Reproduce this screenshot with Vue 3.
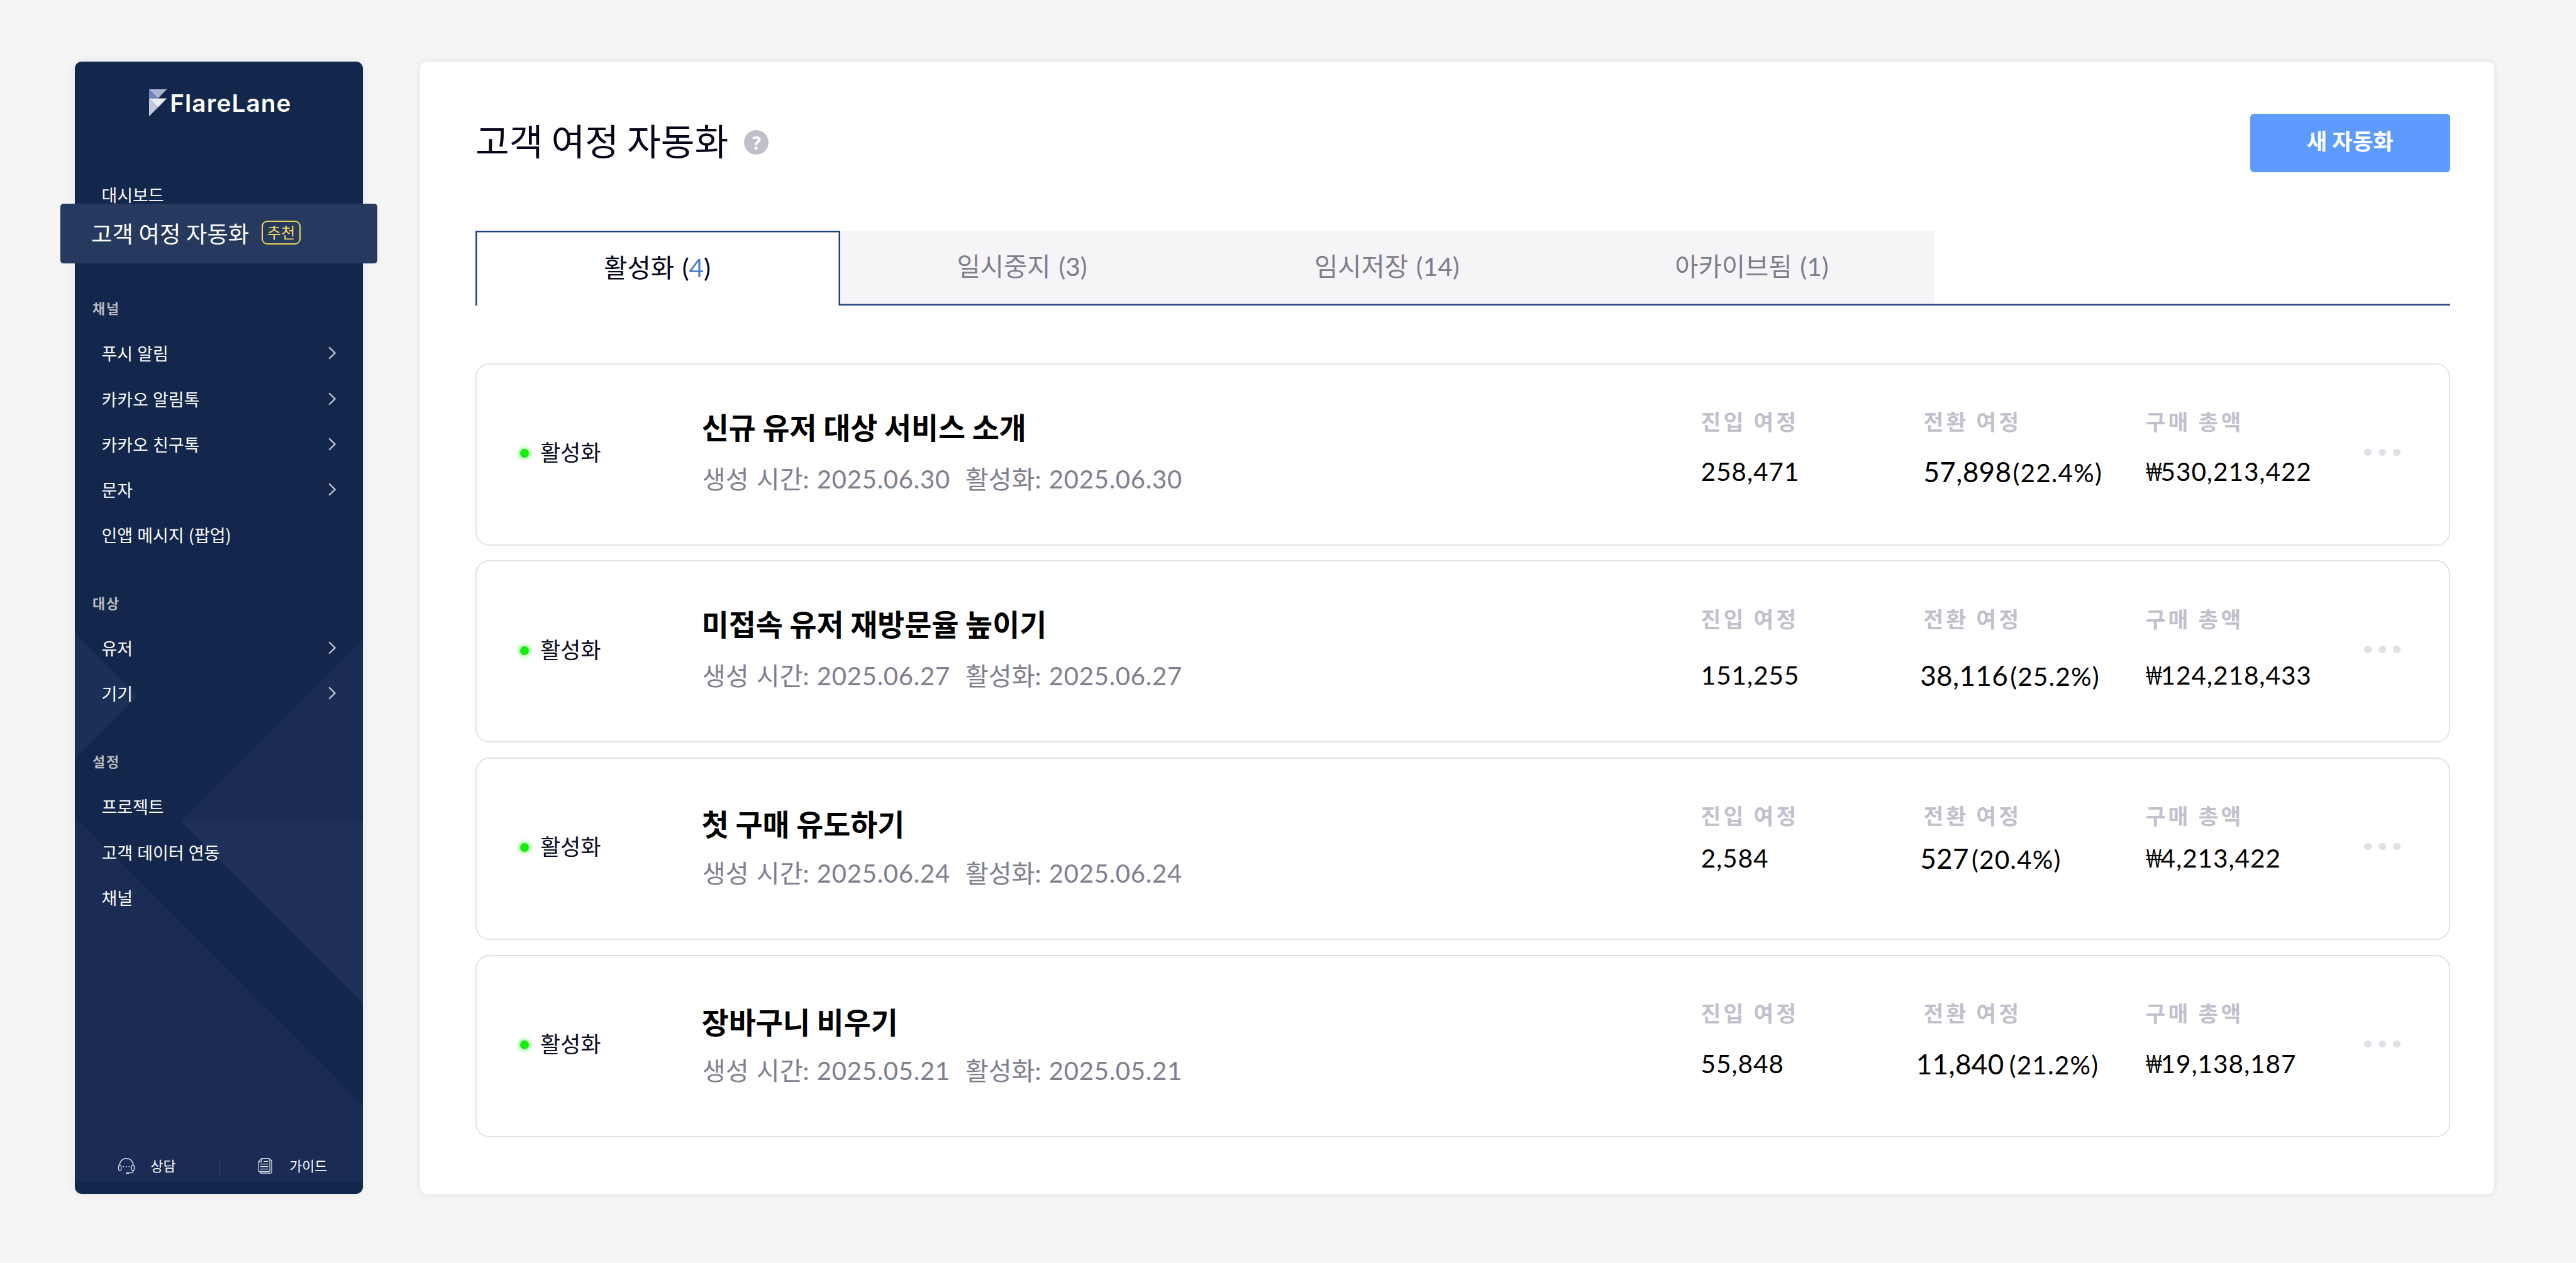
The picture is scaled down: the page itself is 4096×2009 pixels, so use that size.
<script setup>
import { ref } from 'vue';

const menu = [
  {
    title: '채널',
    items: [
      { label: '푸시 알림', more: true },
      { label: '카카오 알림톡', more: true },
      { label: '카카오 친구톡', more: true },
      { label: '문자', more: true },
      { label: '인앱 메시지 (팝업)', more: false },
    ],
  },
  {
    title: '대상',
    items: [
      { label: '유저', more: true },
      { label: '기기', more: true },
    ],
  },
  {
    title: '설정',
    items: [
      { label: '프로젝트', more: false },
      { label: '고객 데이터 연동', more: false },
      { label: '채널', more: false },
    ],
  },
];

const tabs = [
  { label: '활성화', count: 4 },
  { label: '일시중지', count: 3 },
  { label: '임시저장', count: 14 },
  { label: '아카이브됨', count: 1 },
];

const activeTab = ref(0);

const journeys = [
  {
    title: '신규 유저 대상 서비스 소개',
    date: '2025.06.30',
    entered: '258,471',
    converted: '57,898',
    rate: '(22.4%)',
    total: '530,213,422',
  },
  {
    title: '미접속 유저 재방문율 높이기',
    date: '2025.06.27',
    entered: '151,255',
    converted: '38,116',
    rate: '(25.2%)',
    total: '124,218,433',
  },
  {
    title: '첫 구매 유도하기',
    date: '2025.06.24',
    entered: '2,584',
    converted: '527',
    rate: '(20.4%)',
    total: '4,213,422',
  },
  {
    title: '장바구니 비우기',
    date: '2025.05.21',
    entered: '55,848',
    converted: '11,840',
    rate: '(21.2%)',
    total: '19,138,187',
  },
];
</script>

<template>
  <div class="page">
    <aside class="sidebar">
      <svg class="backdrop" viewBox="162 134.5 626.6 2459.5" preserveAspectRatio="none">
        <polygon points="162,1377.5 299,1512 162,1648.6" fill="#1a3056" />
        <polygon points="788.6,1390 391.8,1783.7 788.6,1783.7" fill="#1b2c54" />
        <polygon points="391.8,1783.7 788.6,1783.7 788.6,2182" fill="#1f3159" />
        <polygon points="162,1783.7 170,1783.7 788.6,2404 788.6,2568 162,2568" fill="#1a2c54" />
      </svg>

      <div class="logo">
        <svg class="mark" viewBox="0 0 38.5 58.8">
          <path d="M0 0H38.5L19.3 19.8Z" fill="#a9b4d3" />
          <path d="M0 0L19.3 19.8H0Z" fill="#6f84b8" />
          <path d="M0 19.8H38.5L19.3 39.6Z" fill="#e9ecf5" />
          <path d="M0 19.8L19.3 39.6L0 58.8Z" fill="#c0cadf" />
        </svg>
        <span class="brand">FlareLane</span>
      </div>

      <nav>
        <div class="item">대시보드</div>
        <div class="current">
          <span>고객 여정 자동화</span>
          <span class="badge">추천</span>
        </div>
        <template v-for="group in menu" :key="group.title">
          <div class="group">{{ group.title }}</div>
          <div v-for="item in group.items" :key="item.label" class="item">
            <span>{{ item.label }}</span>
            <svg v-if="item.more" class="chevron" viewBox="0 0 12 21">
              <path d="M1.2 1.2L10.6 10.5L1.2 19.8" />
            </svg>
          </div>
        </template>
      </nav>

      <div class="bottom">
        <svg class="headset" viewBox="0 0 35 34">
          <path d="M3 15V14.5A14.5 13.5 0 0 1 32 14.5V15" />
          <rect x="0.8" y="15.5" width="5.4" height="11" rx="2" />
          <rect x="28.8" y="15.5" width="5.4" height="11" rx="2" />
          <path d="M32.5 26.5C32.5 30.5 29 32 25 32H22" />
          <path class="mic" d="M17.5 32.3H22" />
          <path class="talk" d="M11.5 18.7h.1M17.5 18.7h.1M23.5 18.7h.1" />
        </svg>
        <span class="help">상담</span>
        <i class="divider"></i>
        <svg class="doc" viewBox="0 0 31 34">
          <path d="M8.5 1H23Q26 1 26 4V26.5Q26 29.5 23 29.5H4Q1 29.5 1 26.5V8.5Z" />
          <path d="M8.5 1V8.5H1" />
          <path d="M26 4H27Q30 4 30 7V30Q30 33 27 33H8Q5 33 4.6 29.5" />
          <path d="M13 7.5H22.5M5 13H22.5M5 18.5H22.5M5 24H22.5" />
        </svg>
        <span>가이드</span>
      </div>
    </aside>

    <main class="panel">
      <header>
        <h1>고객 여정 자동화</h1>
        <span class="question">?</span>
        <button>새 자동화</button>
      </header>

      <div class="tabs">
        <div
          v-for="(tab, i) in tabs"
          :key="tab.label"
          class="tab"
          :class="{ active: activeTab === i }"
          @click="activeTab = i"
        >
          <span>{{ tab.label }} (<em>{{ tab.count }}</em>)</span>
        </div>
      </div>

      <section class="list">
        <article v-for="journey in journeys" :key="journey.title" class="card">
          <div class="status"><i class="light"></i>활성화</div>
          <div class="info">
            <h2>{{ journey.title }}</h2>
            <p class="dates">
              <span>생성 시간: <time>{{ journey.date }}</time></span>
              <span>활성화: <time>{{ journey.date }}</time></span>
            </p>
          </div>
          <div class="stat">
            <b>진입 여정</b>
            <p>{{ journey.entered }}</p>
          </div>
          <div class="stat">
            <b>전환 여정</b>
            <p class="converted">
              <span class="count">{{ journey.converted }}</span><span>{{ journey.rate }}</span>
            </p>
          </div>
          <div class="stat">
            <b>구매 총액</b>
            <p><span class="won">₩</span>{{ journey.total }}</p>
          </div>
          <div class="more"><i></i><i></i><i></i></div>
        </article>
      </section>
    </main>
  </div>
</template>

<style>
body {
  background: #f5f5f5;
}
</style>

<style scoped>
.page {
  display: flex;
  gap: 90.6px;
  box-sizing: border-box;
  width: 4096px;
  height: 2009px;
  padding: 98.4px 0 0 118.5px;
  overflow: hidden;
  background: #f5f5f5;
  font-family: 'Noto Sans CJK KR', sans-serif;
  white-space: nowrap;
}

.sidebar {
  position: relative;
  display: flex;
  flex-direction: column;
  flex: none;
  width: 458.9px;
  height: 1800.8px;
  border-radius: 11px;
  background: #13274d;
  box-shadow: 0 0 16px rgba(0, 0, 0, 0.07);
  color: #fff;
}

.backdrop {
  position: absolute;
  inset: 0;
  width: 100%;
  height: 100%;
}

.logo {
  position: relative;
  display: flex;
  align-items: center;
  flex: none;
  box-sizing: border-box;
  height: 175.4px;
  padding: 0 0 44.3px 118px;
}

.mark {
  width: 28.2px;
  height: 43.1px;
}

.brand {
  margin-left: 5.5px;
  font-family: Inter, sans-serif;
  font-size: 38.6px;
  font-weight: 600;
  letter-spacing: 1.2px;
}

nav {
  position: relative;
}

.item {
  display: flex;
  align-items: center;
  justify-content: space-between;
  box-sizing: border-box;
  height: 72.2px;
  padding: 0 43px;
  font-size: 26.9px;
  word-spacing: 1.3px;
}

.chevron {
  width: 12px;
  height: 21px;
  fill: none;
  stroke: #c8cdd9;
  stroke-width: 2.2;
}

.current {
  position: relative;
  display: flex;
  align-items: center;
  box-sizing: border-box;
  height: 94.9px;
  margin: -21.6px -22.4px -1.2px;
  padding: 0 0 3px 49px;
  border-radius: 5px;
  background: #26395f;
  font-size: 36.2px;
  word-spacing: 0.8px;
}

.badge {
  box-sizing: border-box;
  width: 62px;
  height: 38px;
  margin-left: 20px;
  border: 2px solid #ecd75c;
  border-radius: 9px;
  color: #f5df5e;
  font-size: 24.1px;
  line-height: 32px;
  text-align: center;
}

.group {
  height: 73px;
  margin-top: 34.8px;
  padding-left: 28.5px;
  color: #b9babf;
  font-size: 21.8px;
  font-weight: 700;
  letter-spacing: 2px;
  line-height: 73px;
}

.bottom {
  position: relative;
  display: flex;
  align-items: center;
  height: 28px;
  margin-top: auto;
  padding: 0 0 29px 69.5px;
  font-size: 21.7px;
}

.bottom svg {
  margin-top: -4px;
  fill: none;
  stroke: #e3e9f5;
  stroke-width: 1.7;
  stroke-linejoin: round;
}

.bottom span {
  margin-top: -5px;
}

.headset {
  width: 26px;
  height: 25.2px;
}

.headset .mic,
.headset .talk {
  stroke-width: 2.6;
  stroke-linecap: round;
}

.help {
  width: 109px;
  margin-left: 25.6px;
}

.divider {
  width: 1.5px;
  height: 28px;
  background: #36476e;
}

.doc {
  width: 22.7px;
  height: 24.9px;
  margin-right: 27.5px;
  margin-left: 60px;
}

.panel {
  box-sizing: border-box;
  width: 3298px;
  height: 1800.8px;
  padding: 0 70.2px 0 88px;
  border-radius: 11px;
  background: #fff;
  box-shadow: 0 0 12px rgba(0, 0, 0, 0.09);
}

header {
  display: flex;
  align-items: center;
  height: 93.4px;
  padding-top: 82.6px;
}

h1 {
  margin: -13px 0 0;
  color: #05051b;
  font-size: 58.4px;
  font-weight: 400;
}

.question {
  width: 39px;
  height: 39px;
  margin: -3px 0 0 25.2px;
  border-radius: 50%;
  background: #bfbfcb;
  color: #fff;
  font-family: 'Open Sans', sans-serif;
  font-size: 29px;
  font-weight: 700;
  line-height: 39px;
  text-align: center;
}

button {
  width: 318.2px;
  height: 93.4px;
  margin-left: auto;
  padding: 0 0 11px;
  border: 0;
  border-radius: 6px;
  background: #5d9bff;
  color: #fff;
  font-family: inherit;
  font-size: 35.3px;
  font-weight: 700;
}

.tabs {
  display: flex;
  height: 119px;
  margin-top: 92.4px;
  box-shadow: inset 0 -2.5px #1e427f;
}

.tab {
  box-sizing: border-box;
  width: 580.1px;
  box-shadow: inset 0 -2.5px #1e427f;
  background: #f5f5f8;
  color: #7d7d8c;
  font-family: Lato, 'Noto Sans CJK KR', sans-serif;
  font-size: 40.5px;
  line-height: 113px;
  text-align: center;
  text-indent: -2px;
  word-spacing: 2.5px;
}

.tab em {
  font-style: normal;
}

.tab.active {
  background: #fff;
  box-shadow: inset 2.5px 0 #1e427f, inset -2.5px 0 #1e427f, inset 0 2.5px #1e427f;
  color: #05051b;
  line-height: 117px;
}

.active em {
  color: #4a7fcb;
}

.list {
  display: flex;
  flex-direction: column;
  gap: 23.7px;
  margin-top: 91.8px;
}

.card {
  --title-top: 68.5px;
  --value-top: 145.2px;
  --shift: 0px;
  --rate-gap: 2px;
  display: grid;
  grid-template-columns: 288.4px 1588.7px 354px 353.1px 347.8px 60px;
  box-sizing: border-box;
  height: 290px;
  padding-left: 69.4px;
  border: 2px solid #e2e2e7;
  border-radius: 22px;
}

.card:nth-child(2) {
  --title-top: 67.5px;
  --value-top: 156px;
  --shift: -5.3px;
  --rate-gap: 3px;
}

.card:nth-child(3) {
  --title-top: 72.3px;
  --value-top: 132.6px;
  --shift: -5.3px;
  --rate-gap: 4px;
}

.card:nth-child(4) {
  --title-top: 73.3px;
  --value-top: 146.8px;
  --shift: -11.8px;
  --rate-gap: 8px;
}

.status {
  display: flex;
  align-items: center;
  height: 276px;
  color: #0b0b23;
  font-size: 35px;
}

.light {
  width: 14px;
  height: 14px;
  margin: 7px 17.5px 0 0;
  border-radius: 50%;
  background: #12ee0c;
  box-shadow: 0 0 6px 2px rgba(40, 255, 30, 0.55);
}

.info {
  display: grid;
  grid-template-rows: 157.2px 50px;
}

h2 {
  margin: 0;
  padding-top: var(--title-top);
  color: #000;
  font-size: 46.8px;
  font-weight: 700;
  line-height: 60px;
}

.dates {
  display: flex;
  gap: 24px;
  margin: 0;
  padding-left: 1px;
  color: #7f7f8e;
  font-family: Lato, 'Noto Sans CJK KR', sans-serif;
  font-size: 40.1px;
  line-height: 50px;
  word-spacing: 2px;
}

.dates time {
  letter-spacing: 0.72px;
}

.stat {
  display: grid;
  align-content: start;
}

.stat b,
.stat p {
  grid-area: 1 / 1;
  margin: 0;
  line-height: 50px;
}

.stat b {
  padding-top: 64.4px;
  color: #c1c1cd;
  font-size: 34.5px;
  letter-spacing: 4.2px;
}

.stat p {
  padding-top: var(--value-top);
  color: #000;
  font-family: Lato, 'Noto Sans CJK KR', sans-serif;
  font-size: 40.5px;
  letter-spacing: 0.95px;
}

.stat .converted {
  margin-left: var(--shift);
}

.converted span {
  letter-spacing: 1.2px;
}

.converted .count {
  margin-right: var(--rate-gap);
  font-size: 44px;
  letter-spacing: 0.4px;
}

/* the narrow won sign keeps the height of the digits */
.won {
  display: inline-block;
  width: 25px;
  margin-left: -1px;
  letter-spacing: 0;
  transform: scaleX(0.65);
  transform-origin: left;
}

.more {
  display: flex;
  gap: 11.5px;
  padding-top: 134px;
}

.more i {
  width: 11.5px;
  height: 11.5px;
  border-radius: 50%;
  background: #e0e0e6;
}
</style>
